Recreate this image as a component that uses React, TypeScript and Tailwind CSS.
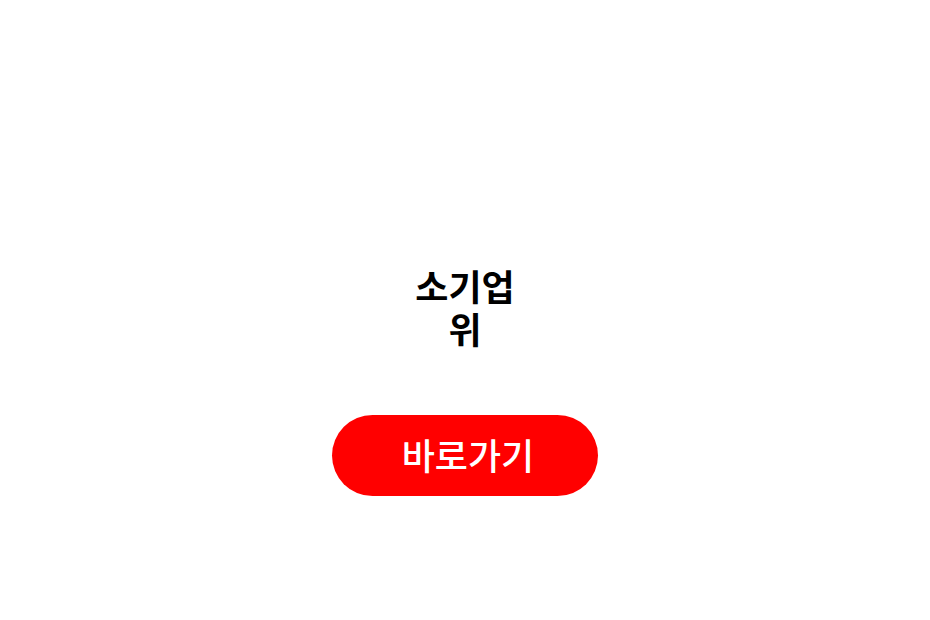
export default function App() {
  return (
    <div className="min-h-screen bg-white flex flex-col items-center pt-[264px] font-['Noto_Sans_CJK_KR','Noto_Sans',sans-serif]">
      {/* Title */}
      <h1 className="text-[36px] leading-[43px] font-bold text-black text-center">
        소기업
        <br />
        위
      </h1>

      {/* CTA */}
      <button className="mt-[65px] w-[266px] h-[81px] rounded-full bg-[#ff0000] text-white text-[36px] font-medium flex items-center justify-center pl-[6px] pb-[4px]">
        바로가기
      </button>
    </div>
  );
}
